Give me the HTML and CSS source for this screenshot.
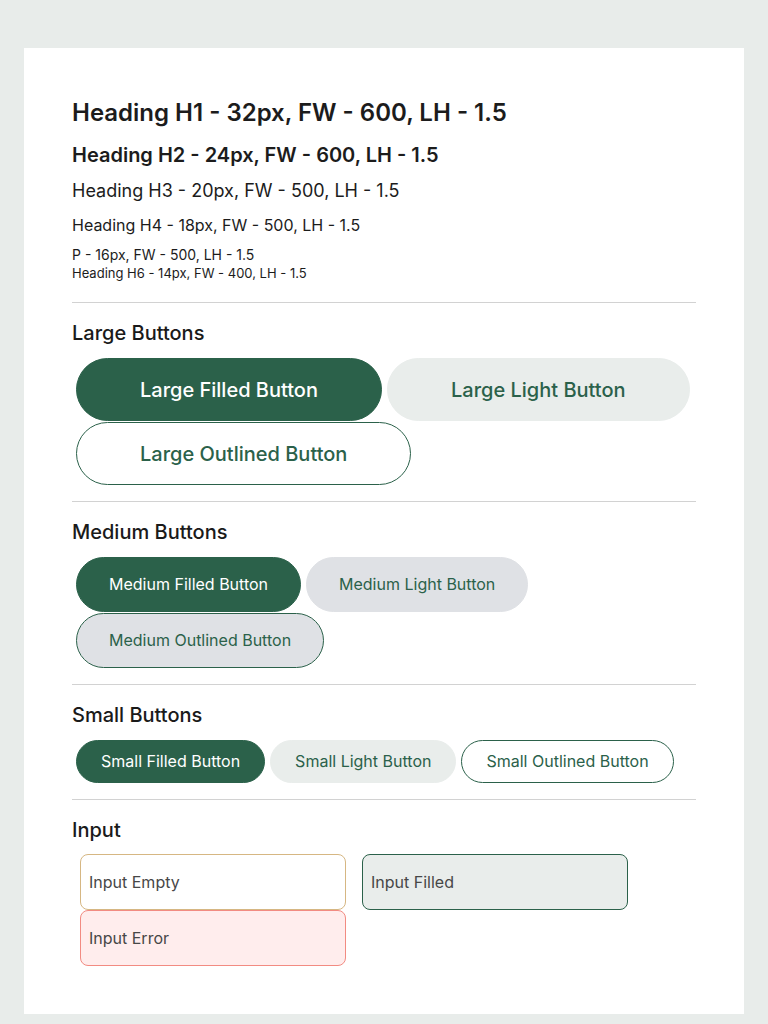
FILE: index.html
```html
<!DOCTYPE html>
<html lang="en">
<head>
<meta charset="utf-8">
<title>Design System</title>
<link rel="stylesheet" href="styles.css">
</head>
<body>
<main class="card">
  <section class="type">
    <h1 class="h1">Heading H1 - 32px, FW - 600, LH - 1.5</h1>
    <h2 class="h2">Heading H2 - 24px, FW - 600, LH - 1.5</h2>
    <h3 class="h3">Heading H3 - 20px, FW - 500, LH - 1.5</h3>
    <h4 class="h4">Heading H4 - 18px, FW - 500, LH - 1.5</h4>
    <p class="p">P - 16px, FW - 500, LH - 1.5</p>
    <h6 class="h6">Heading H6 - 14px, FW - 400, LH - 1.5</h6>
  </section>
  <hr class="divider">
  <section class="block">
    <h5 class="block-title">Large Buttons</h5>
    <div class="btn-row">
      <button class="btn lg filled">Large Filled Button</button>
      <button class="btn lg light">Large Light Button</button>
      <button class="btn lg outlined">Large Outlined Button</button>
    </div>
  </section>
  <hr class="divider">
  <section class="block">
    <h5 class="block-title">Medium Buttons</h5>
    <div class="btn-row">
      <button class="btn md filled">Medium Filled Button</button>
      <button class="btn md light gray">Medium Light Button</button>
      <button class="btn md outlined gray">Medium Outlined Button</button>
    </div>
  </section>
  <hr class="divider">
  <section class="block">
    <h5 class="block-title">Small Buttons</h5>
    <div class="btn-row">
      <button class="btn sm filled">Small Filled Button</button>
      <button class="btn sm light">Small Light Button</button>
      <button class="btn sm outlined">Small Outlined Button</button>
    </div>
  </section>
  <hr class="divider">
  <section class="block last">
    <h5 class="block-title">Input</h5>
    <div class="input-row">
      <input class="field empty" type="text" placeholder="Input Empty">
      <input class="field filled-in" type="text" value="Input Filled">
      <input class="field error" type="text" value="Input Error">
    </div>
  </section>
</main>
</body>
</html>
```

FILE: styles.css
```css
* { box-sizing: border-box; }

html, body {
  margin: 0;
  padding: 0;
}

body {
  background: #e8ecea;
  padding: 48px 24px 10px;
  font-family: Inter, "Noto Sans", sans-serif;
  color: #1c1c1c;
}

.card {
  background: #ffffff;
  padding: 47px 48px 48px;
  display: flex;
  flex-direction: column;
}

.type {
  display: flex;
  flex-direction: column;
  padding-bottom: 19px;
}

.type h1, .type h2, .type h3, .type h4, .type p, .type h6 {
  margin: 0;
  line-height: 1.5;
  color: #1c1c1c;
}

.type .h1 { font-size: 24px; font-weight: 600; }
.type .h2 { font-size: 20px; font-weight: 600; margin-top: 9px; }
.type .h3 { font-size: 18px; font-weight: 400; margin-top: 7px; }
.type .h4 { font-size: 16px; font-weight: 400; margin-top: 9px; }
.type .p  { font-size: 14px; font-weight: 400; margin-top: 7px; }
.type .h6 { font-size: 13px; font-weight: 400; line-height: 19px; margin-top: -1px; }

.divider {
  margin: 0;
  border: 0;
  height: 1px;
  background: #d2d2d2;
}

.block {
  padding: 15px 0 16px;
  display: flex;
  flex-direction: column;
  gap: 10px;
}

.block.last { padding-bottom: 0; gap: 9px; }

.block-title {
  margin: 0;
  font-size: 20px;
  font-weight: 500;
  line-height: 30px;
  color: #1a1a1a;
}

.btn-row {
  display: flex;
  flex-wrap: wrap;
  gap: 1px 5px;
  padding-left: 4px;
}

.btn {
  font-family: Inter, "Noto Sans", sans-serif;
  border-radius: 999px;
  border: 1px solid transparent;
  cursor: pointer;
  color: #2b614a;
  background: #fff;
  line-height: 1.2;
  white-space: nowrap;
}

.btn.lg {
  height: 63px;
  padding: 0 63px;
  font-size: 20px;
  font-weight: 500;
}

.btn.md {
  height: 55px;
  padding: 0 32px;
  font-size: 16px;
  font-weight: 400;
}

.btn.sm {
  height: 43px;
  padding: 0 24px;
  font-size: 16px;
  font-weight: 400;
}

.btn.filled {
  background: #2b614a;
  border-color: #2b614a;
  color: #ffffff;
}

.btn.light {
  background: #e9edeb;
  border-color: #e9edeb;
}

.btn.outlined {
  border-color: #2b614a;
}

.btn.gray {
  background: #dfe1e5;
}
.btn.light.gray { border-color: #dfe1e5; }

.input-row {
  display: flex;
  flex-wrap: wrap;
  column-gap: 16px;
  padding-left: 8px;
  width: 630px;
}

.field {
  width: 266px;
  height: 56px;
  border-radius: 8px;
  border: 1px solid #d6b783;
  padding: 0 8px;
  font-family: Inter, "Noto Sans", sans-serif;
  font-size: 16px;
  color: #474747;
  background: #ffffff;
  outline: none;
}

.field::placeholder { color: #474747; }

.field.filled-in {
  background: #e9edeb;
  border-color: #2b614a;
}

.field.error {
  background: #ffeded;
  border-color: #f28b82;
}
```
